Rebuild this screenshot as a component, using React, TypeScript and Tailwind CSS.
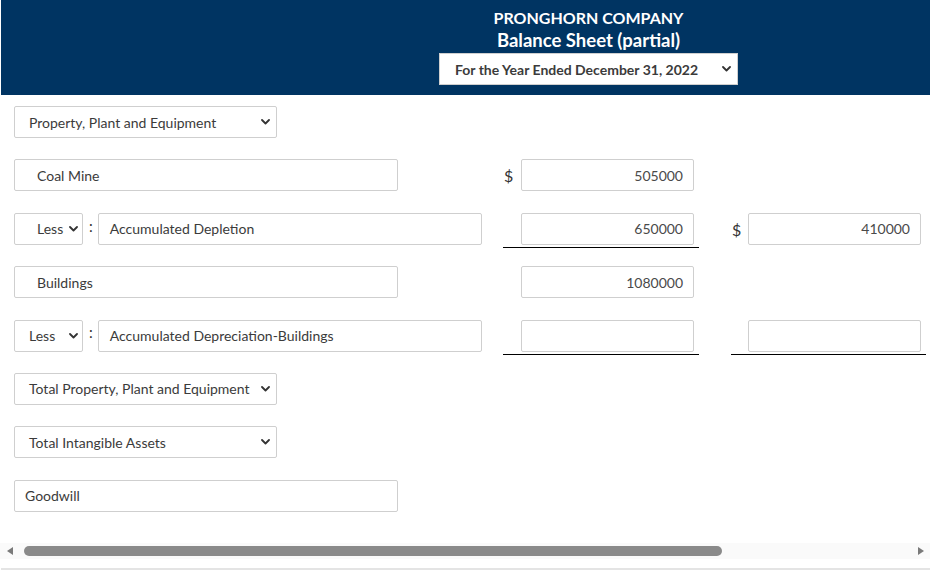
import type { ReactNode } from 'react';

const font = { fontFamily: 'Lato, "Open Sans", sans-serif' };

function Chevron({ className = '' }: { className?: string }) {
  return (
    <svg width="9" height="6" viewBox="0 0 9 6" className={className} aria-hidden="true">
      <path d="M1 1l3.5 3.5L8 1" fill="none" stroke="#333" strokeWidth="1.8" strokeLinecap="round" strokeLinejoin="round" />
    </svg>
  );
}

function SelectBox({ label, width, pad = 'pl-[14px]', chevronRight = 'pr-[6px]' }: { label: string; width: string; pad?: string; chevronRight?: string }) {
  return (
    <div className={`flex h-8 items-center justify-between rounded-[2px] border border-[#cfcfcf] bg-white text-[14px] text-[#3b3b3b] ${width} ${pad} ${chevronRight}`}>
      <span className="whitespace-nowrap">{label}</span>
      <Chevron />
    </div>
  );
}

function TextBox({ value, width, pad = 'pl-[11px]' }: { value: string; width: string; pad?: string }) {
  return (
    <div className={`flex h-8 items-center rounded-[2px] border border-[#cfcfcf] bg-white text-[14px] text-[#3b3b3b] ${width} ${pad}`}>
      <span className="whitespace-nowrap">{value}</span>
    </div>
  );
}

function Amount({ value = '', dollar = false, underline = false, inset = 'pl-[18px]' }: { value?: string; dollar?: boolean; underline?: boolean; inset?: string }) {
  return (
    <div className={`relative flex h-[35px] w-full items-start ${underline ? 'border-b border-black' : ''}`}>
      <div className={`flex h-8 w-full items-center ${inset} pr-[5px]`}>
        <div className="flex h-8 w-full items-center justify-end rounded-[2px] border border-[#cfcfcf] bg-white pr-[10px] text-[14px] text-[#4a4a4a]">
          {value}
        </div>
      </div>
      {dollar && <span className="absolute left-[1px] top-[5px] text-[16px] text-[#333]">$</span>}
    </div>
  );
}

function Row({ left, col1, col2 }: { left: ReactNode; col1?: ReactNode; col2?: ReactNode }) {
  return (
    <div className="grid h-8 grid-cols-[503px_196px_32px_195px] items-start">
      <div className="flex h-8 items-center pl-[14px]">{left}</div>
      <div>{col1}</div>
      <div />
      <div>{col2}</div>
    </div>
  );
}

function Colon() {
  return <span className="mb-[6px] ml-[6px] mr-[5px] text-[15px] text-[#333]">:</span>;
}

export default function App() {
  return (
    <div className="h-[571px] w-[930px] overflow-hidden bg-white" style={font}>
      {/* HEADER */}
      <div className="ml-px flex h-[95px] bg-[#003462]">
        <div className="w-[438px] shrink-0" />
        <div className="flex w-[299px] flex-col items-center">
          <div className="mt-[7px] text-[16px] font-bold leading-[22px] text-white">PRONGHORN COMPANY</div>
          <div className="text-[18.5px] font-bold leading-[22px] text-white">Balance Sheet (partial)</div>
          <div className="mt-[2px] flex h-8 w-full items-center justify-between border border-[#cfcfcf] bg-white pl-[15px] pr-[6px]">
            <span className="text-[14px] font-bold text-[#3b3b3b]">For the Year Ended December 31, 2022</span>
            <Chevron />
          </div>
        </div>
      </div>

      {/* ROWS */}
      <div className="flex flex-col gap-[21.4px] pt-[11px]">
        <Row left={<SelectBox label="Property, Plant and Equipment" width="w-[263px]" />} />
        <Row
          left={<TextBox value="Coal Mine" width="w-[384px]" pad="pl-[22px]" />}
          col1={<Amount value="505000" dollar />}
        />
        <Row
          left={
            <>
              <SelectBox label="Less" width="w-[69px]" pad="pl-[22px]" chevronRight="pr-[4px]" />
              <Colon />
              <TextBox value="Accumulated Depletion" width="w-[384px]" />
            </>
          }
          col1={<Amount value="650000" underline />}
          col2={<Amount value="410000" dollar inset="pl-[17px]" />}
        />
        <Row
          left={<TextBox value="Buildings" width="w-[384px]" pad="pl-[22px]" />}
          col1={<Amount value="1080000" />}
        />
        <Row
          left={
            <>
              <SelectBox label="Less" width="w-[69px]" pad="pl-[14px]" chevronRight="pr-[4px]" />
              <Colon />
              <TextBox value="Accumulated Depreciation-Buildings" width="w-[384px]" />
            </>
          }
          col1={<Amount underline />}
          col2={<Amount underline inset="pl-[17px]" />}
        />
        <Row left={<SelectBox label="Total Property, Plant and Equipment" width="w-[263px]" />} />
        <Row left={<SelectBox label="Total Intangible Assets" width="w-[263px]" />} />
        <Row left={<TextBox value="Goodwill" width="w-[384px]" pad="pl-[10px]" />} />
      </div>

      {/* SCROLLBAR */}
      <div className="mt-[31px] flex h-4 items-center bg-[#fafafa] pl-[7px] pr-[6px]">
        <svg width="6" height="8" viewBox="0 0 6 8" aria-hidden="true">
          <path d="M6 0L0 4l6 4z" fill="#7a7a7a" />
        </svg>
        <div className="ml-[11px] h-[10px] w-[698px] rounded-full bg-[#8a8a8a]" />
        <div className="flex-1" />
        <svg width="6" height="8" viewBox="0 0 6 8" aria-hidden="true">
          <path d="M0 0l6 4-6 4z" fill="#7a7a7a" />
        </svg>
      </div>
      <div className="ml-px mt-[9px] h-[2px] bg-[#e4e4e4]" />
    </div>
  );
}
